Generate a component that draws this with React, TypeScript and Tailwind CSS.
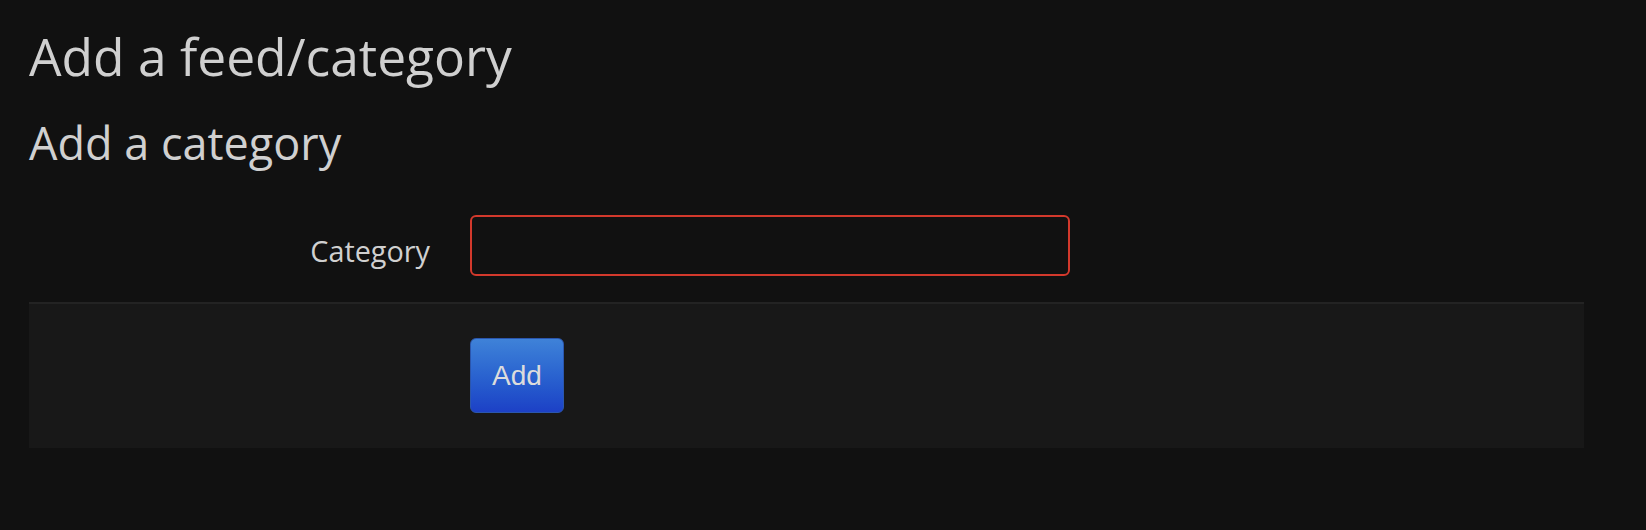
export default function App() {
  return (
    <div className="min-h-[530px] w-full bg-[#111111] text-[#d0d0d0]" style={{ fontFamily: '"Open Sans", "Liberation Sans", sans-serif' }}>
      <div className="w-[1584px] pl-[29px]">
        <h1 className="pt-[26px] text-[51.5px] leading-[60px] font-medium">Add a feed/category</h1>
        <h2 className="mt-[31px] text-[45px] leading-[52px] font-medium">Add a category</h2>

        <form className="mt-[46px]" onSubmit={e => e.preventDefault()}>
          {/* Form group */}
          <div className="flex items-start gap-[40px]">
            <label htmlFor="new-category" className="w-[401px] pt-[16px] text-right text-[28.8px] leading-[40px] font-medium">
              Category
            </label>
            <input
              id="new-category"
              type="text"
              className="h-[61px] w-[600px] rounded-[6px] border-2 border-[#d3392c] bg-[#111111] px-3 text-[28px] text-[#cfcfcf] outline-none"
            />
          </div>

          {/* Form actions */}
          <div className="mt-[26px] flex border-t-2 border-[#232323] bg-[#181818] pt-[34px] pb-[35px] pl-[441px]">
            <button
              type="submit"
              className="h-[75px] w-[94px] rounded-[6px] border border-[#2b56ad] bg-gradient-to-b from-[#3f82d8] to-[#1d40c6] text-[28px] text-[#dcdcdc]"
              style={{ fontFamily: '"Liberation Sans", Arial, sans-serif' }}
            >
              Add
            </button>
          </div>
        </form>
      </div>
    </div>
  );
}
